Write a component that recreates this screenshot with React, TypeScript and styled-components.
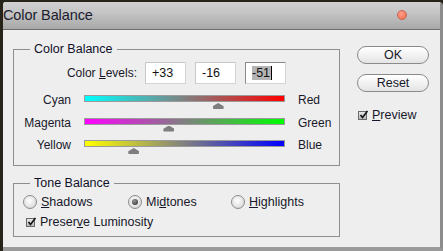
import React from 'react';
import styled, { createGlobalStyle } from 'styled-components';

const GlobalStyle = createGlobalStyle`
    html, body {
        margin: 0;
        padding: 0;
        background: #26241a;
        overflow: hidden;
    }
    body {
        font-family: "Liberation Sans", Arial, sans-serif;
        font-size: 12px;
        color: #18182a;
    }
`;

interface ISlider {
    left: string;
    right: string;
    from: string;
    to: string;
    value: number;
}

const sliders: ISlider[] = [
    { left: 'Cyan', right: 'Red', from: '#00ffff', to: '#ff0000', value: 33 },
    { left: 'Magenta', right: 'Green', from: '#ff00ff', to: '#00ff00', value: -16 },
    { left: 'Yellow', right: 'Blue', from: '#ffff00', to: '#0000ff', value: -51 },
];

const Screen = styled.div`
    width: 443px;
    height: 251px;
    padding: 2px 0 0 3px;
    box-sizing: border-box;
`;

const Window = styled.div`
    width: 440px;
    height: 249px;
    box-sizing: border-box;
    background: #eeeeee;
    border-right: 3px solid #8c8c8c;
    border-bottom: 4px solid #9a9a9a;
    border-top-left-radius: 3px;
    border-top-right-radius: 4px;
    overflow: hidden;
    display: flex;
    flex-direction: column;
`;

const TitleBar = styled.div`
    height: 28px;
    flex: none;
    box-sizing: border-box;
    background: linear-gradient(#d2d2d2, #c4c4c4 40%, #a8a8a8);
    border-bottom: 1px solid #6e6e6e;
    display: flex;
    align-items: center;
    justify-content: space-between;
    padding: 0 33px 1px 0;
`;

const Title = styled.span`
    font-size: 14.5px;
    color: #1c1c30;
    letter-spacing: -0.1px;
`;

const CloseDot = styled.span`
    width: 8px;
    height: 8px;
    border-radius: 50%;
    background: radial-gradient(circle at 40% 35%, #ffa08a, #f06a4c);
    border: 1px solid #c86450;
`;

const Body = styled.div`
    flex: 1;
    display: flex;
    padding: 12px 0 0 10px;
`;

const LeftColumn = styled.div`
    width: 327px;
    display: flex;
    flex-direction: column;
    gap: 10px;
`;

const Group = styled.fieldset<{ $height: number }>`
    margin: 0;
    padding: 0;
    height: ${(p) => p.$height}px;
    box-sizing: border-box;
    border: 1px solid #8e8e8e;
    position: relative;
`;

const Legend = styled.legend`
    margin-left: 16px;
    padding: 0 4px;
    font-size: 12.5px;
    color: #10102a;
    line-height: 14px;
`;

const LevelsRow = styled.div`
    display: flex;
    align-items: center;
    margin-top: 6px;
`;

const LevelsLabel = styled.span`
    width: 123px;
    text-align: right;
    margin-right: 8px;
`;

const NumberBox = styled.div<{ $active?: boolean }>`
    width: 41px;
    height: 22px;
    box-sizing: border-box;
    background: #ffffff;
    border: 1px solid #d4d4d4;
    border-top-color: ${(p) => (p.$active ? '#8a8a8a' : '#c8c8c8')};
    border-left-color: ${(p) => (p.$active ? '#8a8a8a' : '#c8c8c8')};
    margin-right: 9px;
    display: flex;
    align-items: center;
    padding-left: 6px;
    font-size: 12.5px;
    color: #111;
`;

const Selected = styled.span`
    background: #b4b4b4;
    border-right: 1px solid #000;
    padding-right: 1px;
`;

const SliderGrid = styled.div`
    display: grid;
    grid-template-columns: 57px 201px auto;
    grid-auto-rows: 22.5px;
    column-gap: 13px;
    margin-top: 9px;
`;

const SideLabel = styled.span<{ $align: 'left' | 'right' }>`
    text-align: ${(p) => p.$align};
    line-height: 14px;
`;

const Track = styled.div`
    position: relative;
`;

const Bar = styled.div<{ $from: string; $to: string }>`
    height: 7px;
    box-sizing: border-box;
    border: 1px solid #9a9a9a;
    margin-top: 2px;
    background: linear-gradient(to right, ${(p) => p.$from}, #808080 50%, ${(p) => p.$to});
`;

const Thumb = styled.span`
    position: absolute;
    top: 10px;
    width: 11px;
    height: 6px;
    margin-left: -5px;
    background: #7e7e7e;
    clip-path: polygon(50% 0, 100% 55%, 100% 100%, 0 100%, 0 55%);
    border-radius: 1px;
`;

const RadioRow = styled.div`
    display: flex;
    align-items: center;
    margin-top: 5px;
    padding-left: 9px;
`;

const RadioItem = styled.label<{ $width: number }>`
    display: flex;
    align-items: center;
    width: ${(p) => p.$width}px;
    gap: 4px;
    font-size: 12.5px;
`;

const RadioCircle = styled.span<{ $checked?: boolean }>`
    width: 14px;
    height: 14px;
    box-sizing: border-box;
    border-radius: 50%;
    border: 1px solid #8c8c8c;
    background: radial-gradient(circle at 45% 40%, #ffffff, #e2e2e2 60%, #c4c4c4);
    display: flex;
    align-items: center;
    justify-content: center;
    &::after {
        content: '';
        display: ${(p) => (p.$checked ? 'block' : 'none')};
        width: 6px;
        height: 6px;
        border-radius: 50%;
        background: radial-gradient(circle at 40% 35%, #9a9a9a, #202020);
    }
`;

const CheckRow = styled.label<{ $indent: number; $top: number }>`
    display: flex;
    align-items: center;
    gap: 5px;
    padding-left: ${(p) => p.$indent}px;
    margin-top: ${(p) => p.$top}px;
    font-size: 12.5px;
`;

const CheckBox = styled.span`
    width: 9px;
    height: 9px;
    box-sizing: border-box;
    border: 1px solid #6a6a6a;
    background: linear-gradient(#e8e8e8, #b8b8b8);
    position: relative;
    svg {
        position: absolute;
        left: -1px;
        top: -3px;
    }
`;

const RightColumn = styled.div`
    display: flex;
    flex-direction: column;
    padding: 4px 0 0 17px;
`;

const Button = styled.button`
    width: 72px;
    height: 18px;
    box-sizing: border-box;
    border: 1px solid #8a8a8a;
    border-radius: 9px;
    background: linear-gradient(#ffffff, #f2f2f2 50%, #e4e4e4);
    font-family: "Liberation Sans", Arial, sans-serif;
    font-size: 12.5px;
    color: #18182a;
    padding: 0;
    margin-bottom: 10px;
    line-height: 16px;
`;

const U = styled.span`
    text-decoration: underline;
`;

const Check = () => (
    <CheckBox>
        <svg width="11" height="11" viewBox="0 0 11 11">
            <path d="M2.5 6 L4.5 8.5 L9.5 2" stroke="#111" strokeWidth="1.6" fill="none" />
        </svg>
    </CheckBox>
);

const App = () => {
    const pos = (v: number) => 100.5 + (v / 100) * 100.5;

    return (
        <Screen>
            <GlobalStyle />
            <Window>
                <TitleBar>
                    <Title>Color Balance</Title>
                    <CloseDot />
                </TitleBar>
                <Body>
                    <LeftColumn>
                        <Group $height={124}>
                            <Legend>Color Balance</Legend>
                            <LevelsRow>
                                <LevelsLabel>Color <U>L</U>evels:</LevelsLabel>
                                <NumberBox>+33</NumberBox>
                                <NumberBox>-16</NumberBox>
                                <NumberBox $active><Selected>-51</Selected></NumberBox>
                            </LevelsRow>
                            <SliderGrid>
                                {sliders.map((s, i) => (
                                    <React.Fragment key={i}>
                                        <SideLabel $align="right">{s.left}</SideLabel>
                                        <Track>
                                            <Bar $from={s.from} $to={s.to} />
                                            <Thumb style={{ left: pos(s.value) }} />
                                        </Track>
                                        <SideLabel $align="left">{s.right}</SideLabel>
                                    </React.Fragment>
                                ))}
                            </SliderGrid>
                        </Group>
                        <Group $height={61}>
                            <Legend>Tone Balance</Legend>
                            <RadioRow>
                                <RadioItem $width={105}><RadioCircle /><span><U>S</U>hadows</span></RadioItem>
                                <RadioItem $width={103}><RadioCircle $checked /><span>Mi<U>d</U>tones</span></RadioItem>
                                <RadioItem $width={100}><RadioCircle /><span><U>H</U>ighlights</span></RadioItem>
                            </RadioRow>
                            <CheckRow $indent={12} $top={6}>
                                <Check />
                                <span>Preser<U>v</U>e Luminosity</span>
                            </CheckRow>
                        </Group>
                    </LeftColumn>
                    <RightColumn>
                        <Button>OK</Button>
                        <Button>Reset</Button>
                        <CheckRow $indent={1} $top={6}>
                            <Check />
                            <span><U>P</U>review</span>
                        </CheckRow>
                    </RightColumn>
                </Body>
            </Window>
        </Screen>
    );
};

export default App;
